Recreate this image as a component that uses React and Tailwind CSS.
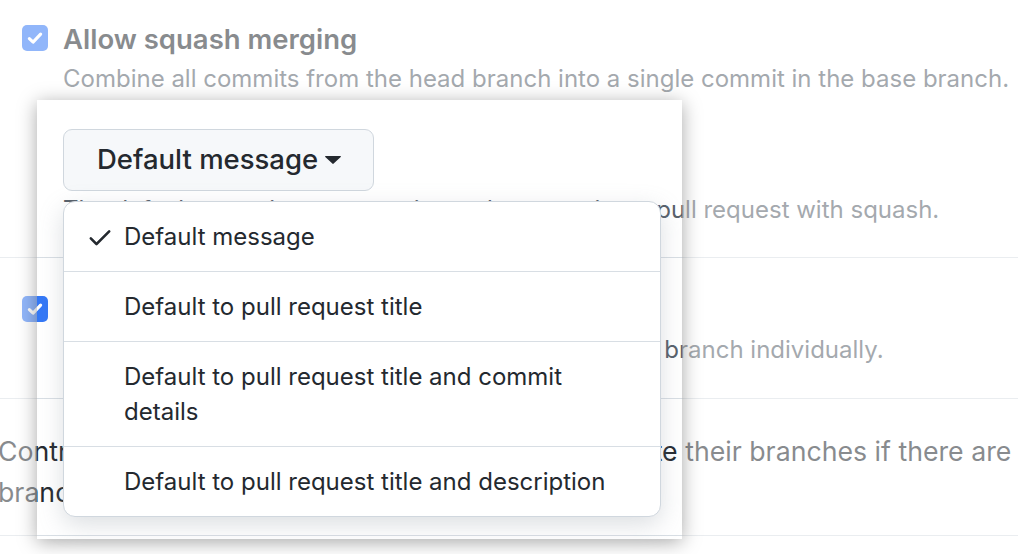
import React from "react";

function Checkbox() {
  return (
    <div className="w-[26px] h-[26px] shrink-0 rounded-[5px] bg-[#3478f6] flex items-center justify-center">
      <svg width="18" height="18" viewBox="0 0 16 16" fill="none">
        <path d="M3 8.6 6.3 11.6 13 4.6" stroke="white" strokeWidth="2.8" strokeLinecap="round" strokeLinejoin="round" />
      </svg>
    </div>
  );
}

function Check() {
  return (
    <svg width="28" height="28" viewBox="0 0 16 16" fill="#24292f" className="shrink-0">
      <path d="M13.78 4.22a.75.75 0 0 1 0 1.06l-7.25 7.25a.75.75 0 0 1-1.06 0L2.22 9.28a.751.751 0 0 1 .018-1.042.751.751 0 0 1 1.042-.018L6 10.94l6.72-6.72a.75.75 0 0 1 1.06 0Z" />
    </svg>
  );
}

const items = [
  "Default message",
  "Default to pull request title",
  "Default to pull request title and commit details",
  "Default to pull request title and description",
];

export default function App() {
  return (
    <div className="relative w-[1018px] h-[554px] overflow-hidden bg-white font-['Inter',sans-serif] text-[#24292f]">
      {/* section 1 */}
      <div className="flex pl-[22px] pt-[25px] pb-[32px]">
        <Checkbox />
        <div className="ml-[15px]">
          <div className="text-[27.5px] font-semibold leading-[28px] whitespace-nowrap">Allow squash merging</div>
          <div className="mt-[11px] text-[24px] leading-[30px] text-[#57606a] whitespace-nowrap">
            Combine all commits from the head branch into a single commit in the base branch.
          </div>
          <button className="mt-[35px] w-[311px] h-[62px] flex items-center pl-[33px] rounded-[9px] border border-[#d0d7de] bg-[#f6f8fa] text-[27.5px] font-medium text-[#24292f]">
            <span>Default message</span>
            <svg width="16" height="8" viewBox="4.3 7 7.4 3.9" className="ml-[7px]" fill="#24292f" preserveAspectRatio="none">
              <path d="m4.427 7.427 3.396 3.396a.25.25 0 0 0 .354 0l3.396-3.396A.25.25 0 0 0 11.396 7H4.604a.25.25 0 0 0-.177.427Z" />
            </svg>
          </button>
          <div className="mt-[4px] text-[24px] leading-[30px] text-[#57606a] whitespace-nowrap">
            The default commit message given when merging a pull request with squash.
          </div>
        </div>
      </div>
      <div className="h-px bg-[#d8dee4]" />

      {/* section 2 */}
      <div className="flex pl-[22px] pt-[38px] pb-[33px]">
        <Checkbox />
        <div className="ml-[15px]">
          <div className="text-[27.5px] font-semibold leading-[28px] whitespace-nowrap">Allow rebase merging</div>
          <div className="mt-[11px] text-[24px] leading-[30px] text-[#57606a] whitespace-nowrap">
            Add all commits from the head branch onto the base branch individually.
          </div>
        </div>
      </div>
      <div className="h-px bg-[#d8dee4]" />

      {/* section 3 */}
      <div className="pt-[32px] pb-[22px] -ml-[2px] text-[26.7px] leading-[41px] whitespace-nowrap">
        Control whether collaborators are prompted to update their branches if there are
        <br />
        branches behind the base branch.
      </div>
      <div className="h-px bg-[#d8dee4]" />

      {/* spotlight frame */}
      <div className="absolute left-[37px] top-[100px] w-[645px] h-[439px] shadow-[0_3px_18px_rgba(0,0,0,0.34),0_0_0_1400px_rgba(255,255,255,0.46)]" />

      {/* dropdown menu */}
      <div className="absolute left-[63px] top-[201px] w-[598px] rounded-[12px] border border-[#d0d7de] bg-white shadow-[0_8px_24px_rgba(140,149,159,0.3)] overflow-hidden">
        {items.map((t, i) => (
          <div
            key={t}
            className={`flex items-start pl-[22px] pr-[26px] py-[17px] text-[24px] leading-[35px] ${i > 0 ? "border-t border-[#d8dee4]" : ""}`}
          >
            <div className="w-[28px] h-[35px] flex items-center shrink-0">{i === 0 ? <Check /> : null}</div>
            <span className="ml-[10px]">{t}</span>
          </div>
        ))}
      </div>
    </div>
  );
}
